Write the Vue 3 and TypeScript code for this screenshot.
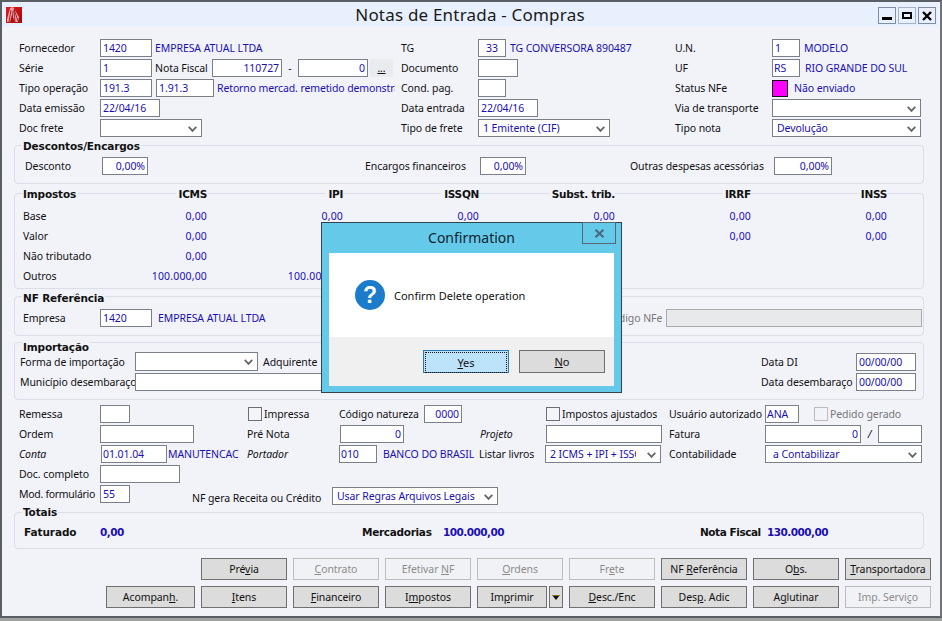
<script setup lang="ts">
const headers: string[] = ['ICMS', 'IPI', 'ISSQN', 'Subst. trib.', 'IRRF', 'INSS']
const taxRows: { label: string; values: string[] }[] = [
  { label: 'Base', values: ['0,00', '0,00', '0,00', '0,00', '0,00', '0,00'] },
  { label: 'Valor', values: ['0,00', '0,00', '0,00', '0,00', '0,00', '0,00'] },
  { label: 'Não tributado', values: ['0,00', '', '', '', '', ''] },
  { label: 'Outros', values: ['100.000,00', '100.000,00', '', '', '', ''] },
]
</script>

<template>
  <div class="screen">
    <div class="window">
      <header class="titlebar">
        <svg class="logo" width="16" height="16" viewBox="0 0 16 16">
          <defs>
            <linearGradient id="lg" x1="0" y1="0" x2="1" y2="1">
              <stop offset="0" stop-color="#e01a1a" />
              <stop offset="1" stop-color="#a80808" />
            </linearGradient>
          </defs>
          <rect width="16" height="16" fill="url(#lg)" />
          <path d="M1 12 L4 1 L7 0 L13 10 L12 15 L9 15 L6 8 L4 15 L1 15 Z" fill="#f0a0a8" />
          <path d="M3 15 L5 3 M6 15 L7 4 M9 15 L8 3 M12 14 L8 2" stroke="#8a0a10" stroke-width="0.8" fill="none" />
        </svg>
        <h1 class="title">Notas de Entrada - Compras</h1>
        <div class="winbtns">
          <button class="winbtn"><span class="g-min"></span></button>
          <button class="winbtn winbtn-soft"><span class="g-max"></span></button>
          <button class="winbtn">
            <svg width="12" height="10" viewBox="0 0 12 10"><path d="M2 1 L10 9 M10 1 L2 9" stroke="#000" stroke-width="2.4" /></svg>
          </button>
        </div>
      </header>

      <main class="body">
        <section class="top">
          <div class="col">
            <div class="row"><label class="l81">Fornecedor</label><span class="inp w52 blue">1420</span><span class="link ml3">EMPRESA ATUAL LTDA</span></div>
            <div class="row"><label class="l81">Série</label><span class="inp w52 blue">1</span><span class="ml3 l57">Nota Fiscal</span><span class="inp w70 right blue">110727</span><span class="dash">-</span><span class="inp w70 right blue">0</span><span class="dots"><u>...</u></span></div>
            <div class="row"><label class="l81">Tipo operação</label><span class="inp w52 blue">191.3</span><span class="inp w58 blue ml4">1.91.3</span><span class="link ml3 clip-op">Retorno mercad. remetido demonstração</span></div>
            <div class="row"><label class="l81">Data emissão</label><span class="inp w60 blue">22/04/16</span></div>
            <div class="row"><label class="l81">Doc frete</label><span class="sel w102"><i class="chev"></i></span></div>
          </div>
          <div class="col">
            <div class="row"><label class="l77">TG</label><span class="inp w28 center blue">33</span><span class="link ml4">TG CONVERSORA 890487</span></div>
            <div class="row"><label class="l77">Documento</label><span class="inp w40"></span></div>
            <div class="row"><label class="l77">Cond. pag.</label><span class="inp w28"></span></div>
            <div class="row"><label class="l77">Data entrada</label><span class="inp w60 blue">22/04/16</span></div>
            <div class="row"><label class="l77">Tipo de frete</label><span class="sel w132 blue">1 Emitente (CIF)<i class="chev"></i></span></div>
          </div>
          <div class="col">
            <div class="row"><label class="l97">U.N.</label><span class="inp w28 blue">1</span><span class="link ml4">MODELO</span></div>
            <div class="row"><label class="l97">UF</label><span class="inp w28 blue tight">RS</span><span class="link ml5">RIO GRANDE DO SUL</span></div>
            <div class="row"><label class="l97">Status NFe</label><span class="swatch"></span><span class="link ml6">Não enviado</span></div>
            <div class="row"><label class="l97">Via de transporte</label><span class="sel w149"><i class="chev"></i></span></div>
            <div class="row"><label class="l97">Tipo nota</label><span class="sel w149 blue">Devolução<i class="chev"></i></span></div>
          </div>
        </section>

        <section class="group g-desc">
          <div class="legend up">Descontos/Encargos</div>
          <div class="row pad-desc">
            <label class="l77">Desconto</label><span class="inp w46 right blue">0,00%</span>
            <label class="enc-label">Encargos financeiros</label><span class="inp w46 right blue">0,00%</span>
            <label class="out-label">Outras despesas acessórias</label><span class="inp w58 right blue">0,00%</span>
          </div>
        </section>

        <section class="group g-tax">
          <div class="tax-head">
            <div class="legend flat">Impostos</div>
            <div v-for="h in headers" :key="h" class="tax-h"><b>{{ h }}</b></div>
          </div>
          <div v-for="r in taxRows" :key="r.label" class="tax-row">
            <span class="tax-label">{{ r.label }}</span>
            <span v-for="(v, i) in r.values" :key="i" class="tax-v">{{ v }}</span>
          </div>
        </section>

        <section class="group g-ref">
          <div class="legend">NF Referência</div>
          <div class="row ref-row">
            <label class="l77">Empresa</label><span class="inp w52 blue">1420</span><span class="link ml6">EMPRESA ATUAL LTDA</span>
            <label class="nfe-label">Código NFe</label><span class="inp w256 dis"></span>
          </div>
        </section>

        <section class="group g-imp">
          <div class="legend low">Importação</div>
          <div class="imp-row imp-first">
            <label class="l115">Forma de importação</label><span class="sel w123 h19 up1"><i class="chev"></i></span>
            <label class="adq">Adquirente</label>
            <label class="data-label">Data DI</label><span class="inp w60 blue">00/00/00</span>
          </div>
          <div class="imp-row">
            <label class="l115">Município desembaraço</label><span class="inp w400"></span>
            <label class="data-label">Data desembaraço</label><span class="inp w60 blue">00/00/00</span>
          </div>
        </section>

        <section class="lower">
          <div class="row">
            <label class="l81">Remessa</label><span class="inp w30"></span>
            <span class="chk ml118"></span><label class="ml2 l75">Impressa</label>
            <label class="l85">Código natureza</label><span class="inp w38 right blue">0000</span>
            <span class="chk ml84"></span><label class="ml2 l107">Impostos ajustados</label>
            <label class="l96">Usuário autorizado</label><span class="inp w34 blue tight">ANA</span>
            <span class="chk chk-dis ml15"></span><label class="ml2 muted">Pedido gerado</label>
          </div>
          <div class="row">
            <label class="l81">Ordem</label><span class="inp w94"></span>
            <label class="l93 ml53">Pré Nota</label><span class="inp w64 right blue">0</span>
            <em class="l66 ml76">Projeto</em><span class="inp w116"></span>
            <label class="l96 ml7">Fatura</label><span class="inp w96 right blue">0</span>
            <span class="slash">/</span><span class="inp w44"></span>
          </div>
          <div class="row">
            <em class="l81">Conta</em><span class="inp w66 ml1 blue tight">01.01.04</span><span class="link ml1 l79">MANUTENCAC</span>
            <em class="l92">Portador</em><span class="inp w38 blue tight">010</span><span class="link ml6 l96">BANCO DO BRASIL</span>
            <label class="l66">Listar livros</label><span class="sel w116 blue"><span class="clip">2 ICMS + IPI + ISSQN</span><i class="chev"></i></span>
            <label class="l96 ml8">Contabilidade</label><span class="sel w157 blue pad7">a Contabilizar<i class="chev"></i></span>
          </div>
          <div class="row">
            <label class="l81">Doc. completo</label><span class="inp w80"></span>
          </div>
          <div class="row">
            <label class="l81 tight-label">Mod. formulário</label><span class="inp w30 blue">55</span>
            <label class="l140 ml62 low-end">NF gera Receita ou Crédito</label><span class="sel w166 blue low-end">Usar Regras Arquivos Legais<i class="chev"></i></span>
          </div>
        </section>

        <section class="group g-tot">
          <div class="legend up2">Totais</div>
          <div class="tot-row">
            <b class="t76">Faturado</b><b class="tv t262">0,00</b>
            <b class="t81 merc">Mercadorias</b><b class="tv t257">100.000,00</b>
            <b class="t67 nf">Nota Fiscal</b><b class="tv">130.000,00</b>
          </div>
        </section>

        <footer class="actions">
          <div class="btn-row">
            <button class="btn">Pré<u>v</u>ia</button>
            <button class="btn off"><u>C</u>ontrato</button>
            <button class="btn off">Efetivar <u>N</u>F</button>
            <button class="btn off"><u>O</u>rdens</button>
            <button class="btn off">Fr<u>e</u>te</button>
            <button class="btn">NF <u>R</u>eferência</button>
            <button class="btn">O<u>b</u>s.</button>
            <button class="btn"><u>T</u>ransportadora</button>
          </div>
          <div class="btn-row">
            <button class="btn btn-wide">Acompan<u>h</u>.</button>
            <button class="btn"><u>I</u>tens</button>
            <button class="btn"><u>F</u>inanceiro</button>
            <button class="btn">I<u>m</u>postos</button>
            <div class="split">
              <button class="btn btn-split">Im<u>p</u>rimir</button>
              <button class="btn btn-arrow">
                <svg width="8" height="5" viewBox="0 0 8 5"><path d="M0 0 H8 L4 5 Z" fill="#111" /><path d="M0 0.4 H8" stroke="#c8901c" stroke-width="0.8" /></svg>
              </button>
            </div>
            <button class="btn"><u>D</u>esc./Enc</button>
            <button class="btn">Des<u>p</u>. Adic</button>
            <button class="btn">A<u>g</u>lutinar</button>
            <button class="btn off">Imp. Servi<u>ç</u>o</button>
          </div>
        </footer>
      </main>

      <div class="dialog">
        <div class="d-title">
          <span>Confirmation</span>
          <button class="d-close">
            <svg width="11" height="9" viewBox="0 0 11 9"><path d="M1.5 0.8 L9.5 8.2 M9.5 0.8 L1.5 8.2" stroke="#4a6b7c" stroke-width="2.2" /></svg>
          </button>
        </div>
        <div class="d-inner">
          <div class="d-msg">
            <span class="q">?</span>
            <span>Confirm Delete operation</span>
          </div>
          <div class="d-btns">
            <button class="d-btn yes"><span class="focus"><u>Y</u>es</span></button>
            <button class="d-btn"><span class="nofocus"><u>N</u>o</span></button>
          </div>
        </div>
      </div>
    </div>
  </div>
</template>

<style>
html, body { margin: 0; padding: 0; background: #a0a0a0; }
</style>

<style scoped>
.screen {
  width: 942px;
  height: 621px;
  overflow: hidden;
  font-family: "Noto Sans", "Liberation Sans", sans-serif;
  font-size: 10.5px;
  letter-spacing: -0.08px;
  color: #111;
  background: #a0a0a0;
}
.window {
  position: relative;
  width: 938px;
  height: 614px;
  border: 2px solid #5a5f66;
  border-right-color: #707478;
  background: #f1f3f9;
  display: flex;
  flex-direction: column;
}
.titlebar {
  position: relative;
  height: 25px;
  flex: none;
  background: #e8f0fd;
  display: flex;
  align-items: center;
  padding-left: 4px;
  margin-right: 2px;
}
.logo { margin-top: 1px; flex: none; }
.title {
  flex: 1;
  margin: 0;
  padding-left: 40px;
  text-align: center;
  font-size: 17px;
  letter-spacing: 0.2px;
  font-weight: 400;
  color: #1a1a1a;
  line-height: 26px;
}
.winbtns { display: flex; gap: 2px; margin-right: 2px; margin-top: 2px; }
.winbtn {
  width: 18px;
  height: 17px;
  padding: 0;
  margin: 0;
  border: 1px solid #7d8ea5;
  background: #e8f0fd;
  display: flex;
  align-items: center;
  justify-content: center;
}
.winbtn-soft { border-color: #a4b3c6; }
.g-min { width: 10px; height: 3px; background: #000; margin-top: 5px; }
.g-max { width: 6px; height: 3px; border: 2px solid #000; }

.body { flex: 1; padding: 11px 0 0 0; display: flex; flex-direction: column; }

.top { display: grid; grid-template-columns: 382px 274px 1fr; padding-left: 17px; }
.col { display: flex; flex-direction: column; }
.row { display: flex; align-items: center; height: 20px; white-space: nowrap; }

label, em { flex: none; }
.l57 { width: 57px; } .l66 { width: 66px; } .l75 { width: 75px; } .l77 { width: 77px; }
.l79 { width: 79px; } .l81 { width: 81px; } .l85 { width: 85px; } .l92 { width: 92px; }
.l93 { width: 93px; } .l96 { width: 96px; } .l97 { width: 97px; } .l107 { width: 107px; }
.l115 { width: 115px; } .l140 { width: 140px; }
.tight-label { letter-spacing: -0.3px; }

.inp, .sel {
  box-sizing: border-box;
  height: 18px;
  flex: none;
  display: flex;
  align-items: center;
  background: #fff;
  border: 1px solid #7a7f88;
  padding: 0 2px;
  overflow: hidden;
  white-space: nowrap;
}
.sel { position: relative; padding-right: 18px; padding-left: 4px; }
.right { justify-content: flex-end; }
.center { justify-content: center; }
.tight { padding-left: 1px; }
.blue { color: #1a0fb4; }
.link { color: #1a0fb4; }
.w28 { width: 28px; } .w30 { width: 30px; } .w34 { width: 34px; } .w38 { width: 38px; }
.w40 { width: 40px; } .w44 { width: 44px; } .w46 { width: 46px; } .w52 { width: 52px; }
.w58 { width: 58px; } .w60 { width: 60px; } .w64 { width: 64px; } .w66 { width: 66px; }
.w70 { width: 70px; } .w80 { width: 80px; } .w94 { width: 94px; } .w96 { width: 96px; }
.w102 { width: 102px; } .w116 { width: 116px; } .w123 { width: 123px; } .w132 { width: 132px; }
.w149 { width: 149px; } .w157 { width: 157px; } .w166 { width: 166px; } .w256 { width: 256px; }
.w400 { width: 400px; }
.h19 { height: 19px; }
.up1 { margin-bottom: 2px; }
.ml1 { margin-left: 1px; } .ml2 { margin-left: 2px; } .ml3 { margin-left: 3px; } .ml4 { margin-left: 4px; }
.ml5 { margin-left: 5px; } .ml6 { margin-left: 6px; } .ml7 { margin-left: 7px; } .ml8 { margin-left: 8px; } .ml15 { margin-left: 15px; }
.ml53 { margin-left: 53px; } .ml62 { margin-left: 62px; } .ml76 { margin-left: 76px; } .ml84 { margin-left: 84px; }
.ml118 { margin-left: 118px; }
.low-end { align-self: flex-end; margin-bottom: -1px; }
.dash { width: 16px; text-align: center; }
.dots { width: 23px; height: 18px; margin-left: 2px; background: #e9ebef; text-align: center; line-height: 18px; }
.clip-op { width: 178px; overflow: hidden; letter-spacing: -0.12px; }
.swatch { width: 14px; height: 15px; background: #ff00ff; border: 1px solid #111; flex: none; }
.chev {
  position: absolute;
  right: 5px;
  top: 4px;
  width: 5px;
  height: 5px;
  border-right: 2px solid #666;
  border-bottom: 2px solid #666;
  transform: rotate(45deg) scale(0.9);
}
.clip { display: block; width: 86px; overflow: hidden; }
.pad7 { padding-left: 7px; }

.group {
  box-sizing: border-box;
  width: 910px;
  margin-left: 12px;
  border: 1px solid #d9dee8;
  border-radius: 4px;
  flex: none;
}
.legend {
  width: fit-content;
  height: 14px;
  line-height: 14px;
  margin: -6px 0 0 7px;
  padding: 0 1px;
  background: #f1f3f9;
  font-family: "DejaVu Sans", sans-serif;
  font-weight: 700;
  font-size: 10.5px;
  letter-spacing: -0.15px;
  white-space: nowrap;
}
.legend.flat { margin: 0; padding: 0 2px 0 0; }
.legend.low { margin-top: -3px; }
.legend.up { margin-top: -7px; }
.legend.up2 { margin-top: -8px; }

.g-desc { margin-top: 7px; height: 39px; }
.pad-desc { margin: 3px 0 0 10px; }
.enc-label { margin-left: 217px; width: 115px; }
.out-label { margin-left: 104px; width: 144px; }

.g-tax { margin-top: 9px; height: 96px; }
.tax-head, .tax-row {
  display: grid;
  grid-template-columns: 48px repeat(6, 136px);
  padding-left: 8px;
}
.tax-head { margin-top: -7px; height: 14px; margin-bottom: 5px; line-height: 14px; }
.tax-h { text-align: right; font-family: "DejaVu Sans", sans-serif; font-size: 10.5px; letter-spacing: -0.3px; }
.tax-h b { background: #f1f3f9; padding: 0 0 0 3px; white-space: nowrap; }
.tax-row { height: 20px; line-height: 20px; }
.tax-label { white-space: nowrap; }
.tax-v { text-align: right; color: #1a0fb4; white-space: nowrap; letter-spacing: 0.15px; }

.g-ref { margin-top: 7px; height: 40px; }
.ref-row { margin: 3px 1px 0 8px; }
.nfe-label { margin-left: auto; width: 60px; color: #777; }
.inp.dis { background: #e8e9eb; border-color: #aaa; }

.g-imp { margin-top: 6px; height: 58px; }
.imp-row { display: flex; align-items: center; height: 20px; padding-left: 5px; white-space: nowrap; }
.imp-first { margin-top: -2px; }
.adq { margin-left: 5px; }
.data-label { margin-left: auto; width: 95px; }
.imp-row .inp:last-child { margin-right: 7px; }

.lower { margin: 4px 0 0 17px; }

.muted { color: #777; }
.chk { width: 12px; height: 12px; border: 1px solid #6a6f78; background: #f4f5f8; flex: none; display: block; }
.chk-dis { border-color: #bbb; background: #f1f3f9; }
.slash { width: 17px; text-align: center; font-style: italic; }

.g-tot { margin-top: 8px; height: 37px; }
.tot-row { display: flex; margin: 3px 0 0 9px; height: 20px; align-items: center; white-space: nowrap; font-family: "DejaVu Sans", sans-serif; font-size: 10.5px; }
.t76 { width: 76px; } .t262 { width: 262px; } .t81 { width: 81px; } .t257 { width: 257px; } .t67 { width: 67px; }
.tv { color: #1a0fb4; letter-spacing: -0.55px; }
.merc { letter-spacing: -0.3px; }
.nf { letter-spacing: -0.45px; }

.actions { margin-top: 9px; display: flex; flex-direction: column; gap: 6px; align-items: flex-end; padding-right: 9px; }
.btn-row { display: flex; gap: 6px; }
.btn {
  box-sizing: border-box;
  width: 86px;
  height: 22px;
  padding: 0;
  background: #dcdcdc;
  border: 1px solid #6f6f6f;
  font: inherit;
  letter-spacing: inherit;
  color: #111;
  white-space: nowrap;
}
.btn.off { background: #f1f2f5; border-color: #bcbcbc; color: #8c8c8c; }
.btn-wide { width: 89px; }
.split { display: flex; width: 86px; gap: 2px; }
.btn-split { width: 70px; }
.btn-arrow { width: 14px; display: flex; align-items: center; justify-content: center; }

.dialog {
  position: absolute;
  left: 319px;
  top: 220px;
  box-sizing: border-box;
  width: 301px;
  height: 171px;
  background: #65c9ea;
  border: 1px solid #33434d;
  display: flex;
  flex-direction: column;
  font-size: 11px;
  letter-spacing: 0;
}
.d-title {
  height: 30px;
  flex: none;
  text-align: center;
  font-size: 14px;
  line-height: 29px;
  position: relative;
  color: #10242e;
}
.d-close {
  position: absolute;
  top: -1px;
  right: 5px;
  width: 34px;
  height: 22px;
  padding: 0;
  background: transparent;
  border: 1px solid #5a6670;
  display: flex;
  align-items: center;
  justify-content: center;
}
.d-inner {
  margin: 0 7px;
  height: 133px;
  background: #f0f0f0;
  display: flex;
  flex-direction: column;
}
.d-msg {
  height: 84px;
  background: #fff;
  display: flex;
  align-items: center;
  gap: 9px;
  padding-left: 26px;
  color: #111;
}
.q {
  width: 30px;
  height: 30px;
  border-radius: 50%;
  background: #1a7ccb;
  color: #fff;
  font-weight: 700;
  font-size: 23px;
  line-height: 30px;
  text-align: center;
  font-family: "Liberation Sans", sans-serif;
}
.d-btns { display: flex; gap: 10px; justify-content: flex-end; padding: 13px 9px 0 0; }
.d-btn {
  box-sizing: border-box;
  width: 86px;
  height: 23px;
  padding: 0;
  background: #dcdcdc;
  border: 1px solid #6f6f6f;
  font: inherit;
  color: #111;
}
.d-btn.yes { background: #bde3fb; border-color: #2c7ab0; padding: 1px; }
.focus { display: block; height: 19px; line-height: 19px; border: 1px dotted #111; }
.nofocus { display: block; line-height: 21px; }
</style>
